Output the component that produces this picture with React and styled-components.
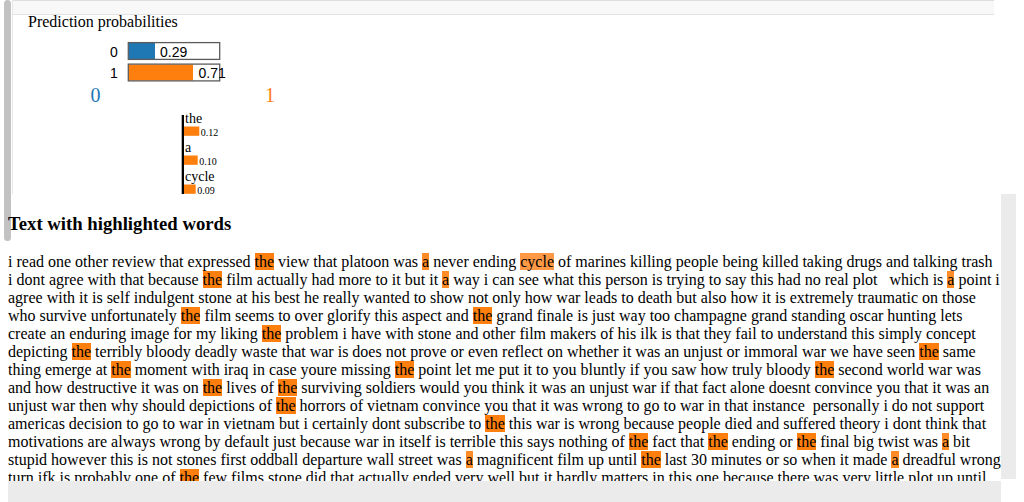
import React from "react";
import styled, { createGlobalStyle } from "styled-components";

const Global = createGlobalStyle`
  html, body { margin: 0; padding: 0; background: #ffffff; }
  body { font-family: "Liberation Serif", "Times New Roman", serif; color: #000; overflow: hidden; }
`;

const Page = styled.div`
  position: relative;
  width: 1024px;
  height: 502px;
  overflow: hidden;
`;

const ScrollThumb = styled.div`
  position: absolute;
  left: 4px;
  top: 0;
  width: 7px;
  height: 241px;
  border-radius: 4px;
  background: #c2c2c2;
`;

const TopPanel = styled.div`
  margin-left: 12px;
  width: 981px;
  height: 194px;
  border-left: 1px solid #e6e6e6;
  display: flex;
  flex-direction: column;
`;

const Band = styled.div`
  height: 13px;
  background: #f8f8f8;
  border-top: 1px solid #dedede;
  border-bottom: 1px solid #e3e3e3;
`;

const Chart = styled.svg`
  display: block;
  overflow: visible;
`;

const TextFrame = styled.div`
  position: relative;
  margin-left: 8px;
  width: 1008px;
  height: 308px;
  display: grid;
  grid-template-columns: 993px 15px;
  grid-template-rows: 285px 2px 21px;
`;

const Viewport = styled.div`
  grid-column: 1 / 2;
  grid-row: 1 / 3;
  overflow: hidden;
`;

const VTrack = styled.div`
  grid-column: 2 / 3;
  grid-row: 1 / 2;
  background: #ebebeb;
`;

const HTrack = styled.div`
  grid-column: 1 / 2;
  grid-row: 3 / 4;
  background: #ebebeb;
`;

const Heading = styled.h3`
  margin: 18.72px 0;
  font-size: 18.72px;
  font-weight: bold;
`;

const Body = styled.div`
  font-size: 16px;
`;

const Line = styled.div`
  white-space: pre;
`;

const Mark = styled.span`
  background: ${(p) => p.$color};
`;

const COLORS = {
  the: "#ff7f0e",
  a: "#ff8c27",
  cycle: "#ff9945",
};

const LINES = [
  "i read one other review that expressed [the] view that platoon was [a] never ending [cycle] of marines killing people being killed taking drugs and talking trash",
  "i dont agree with that because [the] film actually had more to it but it [a] way i can see what this person is trying to say this had no real plot   which is [a] point i",
  "agree with it is self indulgent stone at his best he really wanted to show not only how war leads to death but also how it is extremely traumatic on those",
  "who survive unfortunately [the] film seems to over glorify this aspect and [the] grand finale is just way too champagne grand standing oscar hunting lets",
  "create an enduring image for my liking [the] problem i have with stone and other film makers of his ilk is that they fail to understand this simply concept",
  "depicting [the] terribly bloody deadly waste that war is does not prove or even reflect on whether it was an unjust or immoral war we have seen [the] same",
  "thing emerge at [the] moment with iraq in case youre missing [the] point let me put it to you bluntly if you saw how truly bloody [the] second world war was",
  "and how destructive it was on [the] lives of [the] surviving soldiers would you think it was an unjust war if that fact alone doesnt convince you that it was an",
  "unjust war then why should depictions of [the] horrors of vietnam convince you that it was wrong to go to war in that instance  personally i do not support",
  "americas decision to go to war in vietnam but i certainly dont subscribe to [the] this war is wrong because people died and suffered theory i dont think that",
  "motivations are always wrong by default just because war in itself is terrible this says nothing of [the] fact that [the] ending or [the] final big twist was [a] bit",
  "stupid however this is not stones first oddball departure wall street was [a] magnificent film up until [the] last 30 minutes or so when it made [a] dreadful wrong",
  "turn jfk is probably one of [the] few films stone did that actually ended very well but it hardly matters in this one because there was very little plot up until",
];

function renderLine(str) {
  const parts = str.split(/(\[[a-z]+\])/);
  return parts.map((p, i) => {
    const m = p.match(/^\[([a-z]+)\]$/);
    if (m) {
      return (
        <Mark key={i} $color={COLORS[m[1]]}>
          {m[1]}
        </Mark>
      );
    }
    return <React.Fragment key={i}>{p}</React.Fragment>;
  });
}

const SANS = '"Liberation Sans", Arial, sans-serif';
const SERIF = '"Liberation Serif", "Times New Roman", serif';

function ProbaChart() {
  return (
    <Chart width="300" height="70">
      <text x="15" y="12" fontFamily={SERIF} fontSize="16" fill="#000">
        Prediction probabilities
      </text>
      <text x="97" y="42" fontFamily={SANS} fontSize="14" fill="#000">0</text>
      <rect x="115.7" y="28" width="26.3" height="16" fill="#1f77b4" />
      <rect x="115.3" y="27.6" width="91.4" height="16.8" fill="none" stroke="#5c5c5c" strokeWidth="1.3" />
      <text x="147" y="42" fontFamily={SANS} fontSize="14" fill="#000">0.29</text>
      <text x="97" y="63" fontFamily={SANS} fontSize="14" fill="#000">1</text>
      <rect x="115.7" y="49.5" width="64.3" height="16" fill="#ff7f0e" />
      <rect x="115.3" y="49.1" width="91.4" height="16.8" fill="none" stroke="#5c5c5c" strokeWidth="1.3" />
      <text x="185.5" y="63" fontFamily={SANS} fontSize="14" fill="#000">0.71</text>
    </Chart>
  );
}

const FEATURES = [
  { name: "the", w: 15.3, v: "0.12" },
  { name: "a", w: 13.7, v: "0.10" },
  { name: "cycle", w: 11.7, v: "0.09" },
];

function FeatureChart() {
  return (
    <Chart width="300" height="109">
      <text x="77.5" y="17" fontFamily={SERIF} fontSize="20" fill="#1f77b4">0</text>
      <text x="252" y="17" fontFamily={SERIF} fontSize="20" fill="#ff7f0e">1</text>
      <rect x="168.7" y="30" width="2.3" height="79" fill="#000" />
      {FEATURES.map((f, i) => {
        const base = 38 + i * 29;
        return (
          <g key={f.name}>
            <text x="172" y={base} fontFamily={SERIF} fontSize="14" fill="#000">
              {f.name}
            </text>
            <rect x="171" y={base + 3.5} width={f.w} height="9.3" fill="#ff7f0e" />
            <text x={171 + f.w + 1.5} y={base + 13} fontFamily={SERIF} fontSize="10" fill="#000">
              {f.v}
            </text>
          </g>
        );
      })}
    </Chart>
  );
}

export default function App() {
  return (
    <>
      <Global />
      <Page>
        <ScrollThumb />
        <TopPanel>
          <Band />
          <ProbaChart />
          <FeatureChart />
        </TopPanel>
        <TextFrame>
          <Viewport>
            <Heading>Text with highlighted words</Heading>
            <Body>
              {LINES.map((l, i) => (
                <Line key={i}>{renderLine(l)}</Line>
              ))}
            </Body>
          </Viewport>
          <VTrack />
          <HTrack />
        </TextFrame>
      </Page>
    </>
  );
}
